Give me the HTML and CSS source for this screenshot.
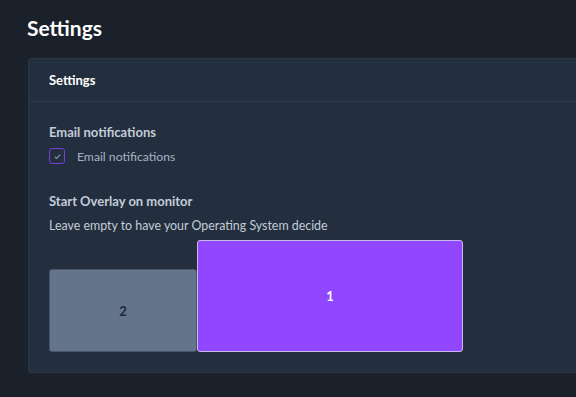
FILE: index.html
```html
<!DOCTYPE html>
<html lang="en">
<head>
  <meta charset="UTF-8">
  <meta name="viewport" content="width=device-width, initial-scale=1.0">
  <title>Settings</title>
  <link rel="stylesheet" href="styles.css">
</head>
<body>
  <h1 class="page-title">Settings</h1>

  <div class="card">
    <div class="card-header">Settings</div>
    <div class="card-body">
      <div class="field">
        <div class="field-label">Email notifications</div>
        <label class="check">
          <span class="check-box">
            <svg width="9" height="9" viewBox="0 0 10 10"><path d="M2 5.2l2 2L8 2.8" fill="none" stroke="#8a94a6" stroke-width="1.2"/></svg>
          </span>
          <span class="check-text">Email notifications</span>
        </label>
      </div>

      <div class="field">
        <div class="field-label">Start Overlay on monitor</div>
        <p class="field-help">Leave empty to have your Operating System decide</p>
        <div class="monitors">
          <button class="monitor monitor-small">2</button>
          <button class="monitor monitor-active">1</button>
        </div>
      </div>
    </div>
  </div>
</body>
</html>
```

FILE: styles.css
```css
html, body {
  margin: 0;
  background: #1b212b;
  overflow: hidden;
}
body {
  padding: 14px 0 0 28px;
  font-family: Lato, "Noto Sans", sans-serif;
  color: #cbd5e1;
}
.page-title {
  margin: 0 0 16px -1px;
  font-size: 21px;
  line-height: 28px;
  font-weight: 700;
  color: #ffffff;
}
.card {
  width: 620px;
  background: #232f3e;
  border: 1px solid #2b3747;
  border-radius: 3px;
}
.card-header {
  height: 42px;
  line-height: 42px;
  padding: 0 20px;
  font-size: 13px;
  font-weight: 700;
  color: #ffffff;
  border-bottom: 1px solid #2e3a4b;
}
.card-body {
  padding: 21px 20px 20px;
}
.field + .field {
  margin-top: 28px;
}
.field-label {
  font-size: 13px;
  line-height: 18px;
  font-weight: 700;
  color: #c3ccd8;
}
.check {
  display: flex;
  align-items: center;
  margin-top: 7px;
}
.check-box {
  width: 14px;
  height: 14px;
  border: 1px solid #7342cf;
  border-radius: 3px;
  display: flex;
  align-items: center;
  justify-content: center;
}
.check-text {
  margin-left: 12px;
  font-size: 12.2px;
  color: #a8b3c2;
}
.field-help {
  margin: 7px 0 0;
  font-size: 12.4px;
  line-height: 18px;
  color: #c3ccd8;
}
.monitors {
  display: flex;
  align-items: flex-end;
  margin-top: 5px;
}
.monitor {
  font-family: inherit;
  font-size: 13px;
  font-weight: 700;
  border-radius: 3px;
  padding: 0;
}
.monitor-small {
  width: 148px;
  height: 83px;
  background: #64748b;
  border: 1px solid #4a5668;
  color: #1e2733;
}
.monitor-active {
  width: 266px;
  height: 112px;
  background: #9146ff;
  border: 1px solid #c9b8ec;
  color: #ffffff;
}
```
